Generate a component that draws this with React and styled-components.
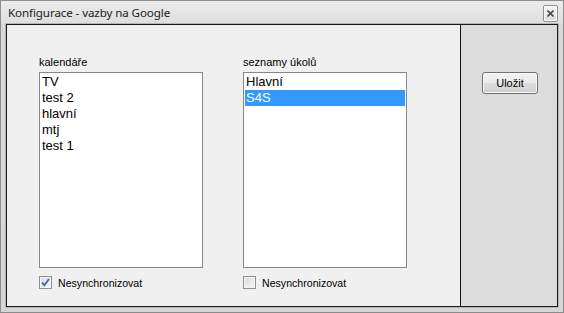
import React from "react";
import styled, { createGlobalStyle } from "styled-components";

const Global = createGlobalStyle`
  html, body { margin: 0; padding: 0; background: #dcdcdc; }
  body { font-family: "Liberation Sans", Arial, sans-serif; }
`;

const Window = styled.div`
  box-sizing: border-box;
  width: 564px;
  height: 313px;
  border: 1px solid #8d8d8d;
  background: linear-gradient(to bottom, #e6e6e6 0px, #d9d9d9 24px, #d6d6d6 100%);
  display: flex;
  flex-direction: column;
`;

const TitleBar = styled.div`
  height: 23px;
  display: flex;
  justify-content: space-between;
  align-items: flex-start;
  padding: 0 5px 0 7px;
  background: linear-gradient(to bottom, #ececec, #dedede);
`;

const Title = styled.span`
  font-family: "Segoe UI", "Noto Sans", sans-serif;
  font-size: 11.6px;
  line-height: 23px;
  color: #1b1b1b;
  letter-spacing: -0.1px;
`;

const CloseButton = styled.div`
  box-sizing: border-box;
  margin-top: 4px;
  width: 15px;
  height: 17px;
  border: 1px solid #8f8f8f;
  border-radius: 2px;
  background: linear-gradient(to bottom, #f6f6f6, #dcdcdc);
  box-shadow: inset 0 0 0 1px #fbfbfb;
  display: flex;
  align-items: center;
  justify-content: center;
`;

const Client = styled.div`
  flex: 1;
  margin: 0 5px 5px 5px;
  border: 1px solid #1a1a1a;
  box-shadow: 0 0 0 1px #b5b5b5;
  display: flex;
  min-height: 0;
`;

const MainPanel = styled.div`
  width: 454px;
  background: #f0f0f0;
  border-right: 1px solid #111;
  display: flex;
  gap: 40px;
  padding: 30px 0 0 32px;
  box-sizing: border-box;
`;

const SidePanel = styled.div`
  flex: 1;
  background: #dcdcdc;
  padding: 47px 0 0 21px;
`;

const Column = styled.div`
  width: 164px;
  display: flex;
  flex-direction: column;
`;

const Label = styled.div`
  font-size: 11px;
  line-height: 14px;
  color: #000;
  height: 14px;
  margin-bottom: 3px;
`;

const ListBox = styled.div`
  box-sizing: border-box;
  height: 196px;
  border: 1px solid #828790;
  background: #fff;
  padding: 1px 1px;
`;

const Item = styled.div`
  height: 16px;
  line-height: 16px;
  font-size: 13px;
  padding-left: 1px;
  color: ${(p) => (p.$selected ? "#fff" : "#000")};
  background: ${(p) => (p.$selected ? "#3399ff" : "transparent")};
`;

const CheckRow = styled.label`
  display: flex;
  align-items: center;
  gap: 6px;
  margin-top: 8px;
  font-size: 10.6px;
  color: #000;
  height: 13px;
`;

const Box = styled.span`
  box-sizing: border-box;
  width: 13px;
  height: 13px;
  border: 1px solid #8f8f8f;
  background: ${(p) =>
    p.$checked
      ? "linear-gradient(135deg, #d7dde6, #f3f5f8)"
      : "linear-gradient(135deg, #dcdcdc, #f6f6f6)"};
  box-shadow: inset 0 0 0 1px #f4f4f4;
  display: flex;
  align-items: center;
  justify-content: center;
`;

const Button = styled.div`
  box-sizing: border-box;
  width: 56px;
  height: 22px;
  border: 1px solid #707070;
  border-radius: 3px;
  background: linear-gradient(to bottom, #f2f2f2 0%, #ebebeb 50%, #dddddd 51%, #cfcfcf 100%);
  box-shadow: inset 0 0 0 1px #fafafa;
  font-size: 11px;
  display: flex;
  align-items: center;
  justify-content: center;
  color: #000;
`;

function Check({ checked, children }) {
  return (
    <CheckRow>
      <Box $checked={checked}>
        {checked && (
          <svg width="9" height="9" viewBox="0 0 9 9">
            <path d="M1 4.5 L3.3 7.2 L8 1" fill="none" stroke="#4a62a0" strokeWidth="1.8" />
          </svg>
        )}
      </Box>
      {children}
    </CheckRow>
  );
}

export default function App() {
  return (
    <>
      <Global />
      <Window>
        <TitleBar>
          <Title>Konfigurace - vazby na Google</Title>
          <CloseButton>
            <svg width="7" height="7" viewBox="0 0 7 7">
              <path d="M0.5 0.5 L6.5 6.5 M6.5 0.5 L0.5 6.5" stroke="#4a4a4a" strokeWidth="1.6" />
            </svg>
          </CloseButton>
        </TitleBar>
        <Client>
          <MainPanel>
            <Column>
              <Label>kalendáře</Label>
              <ListBox>
                <Item>TV</Item>
                <Item>test 2</Item>
                <Item>hlavní</Item>
                <Item>mtj</Item>
                <Item>test 1</Item>
              </ListBox>
              <Check checked>Nesynchronizovat</Check>
            </Column>
            <Column>
              <Label>seznamy úkolů</Label>
              <ListBox>
                <Item>Hlavní</Item>
                <Item $selected>S4S</Item>
              </ListBox>
              <Check>Nesynchronizovat</Check>
            </Column>
          </MainPanel>
          <SidePanel>
            <Button>Uložit</Button>
          </SidePanel>
        </Client>
      </Window>
    </>
  );
}
